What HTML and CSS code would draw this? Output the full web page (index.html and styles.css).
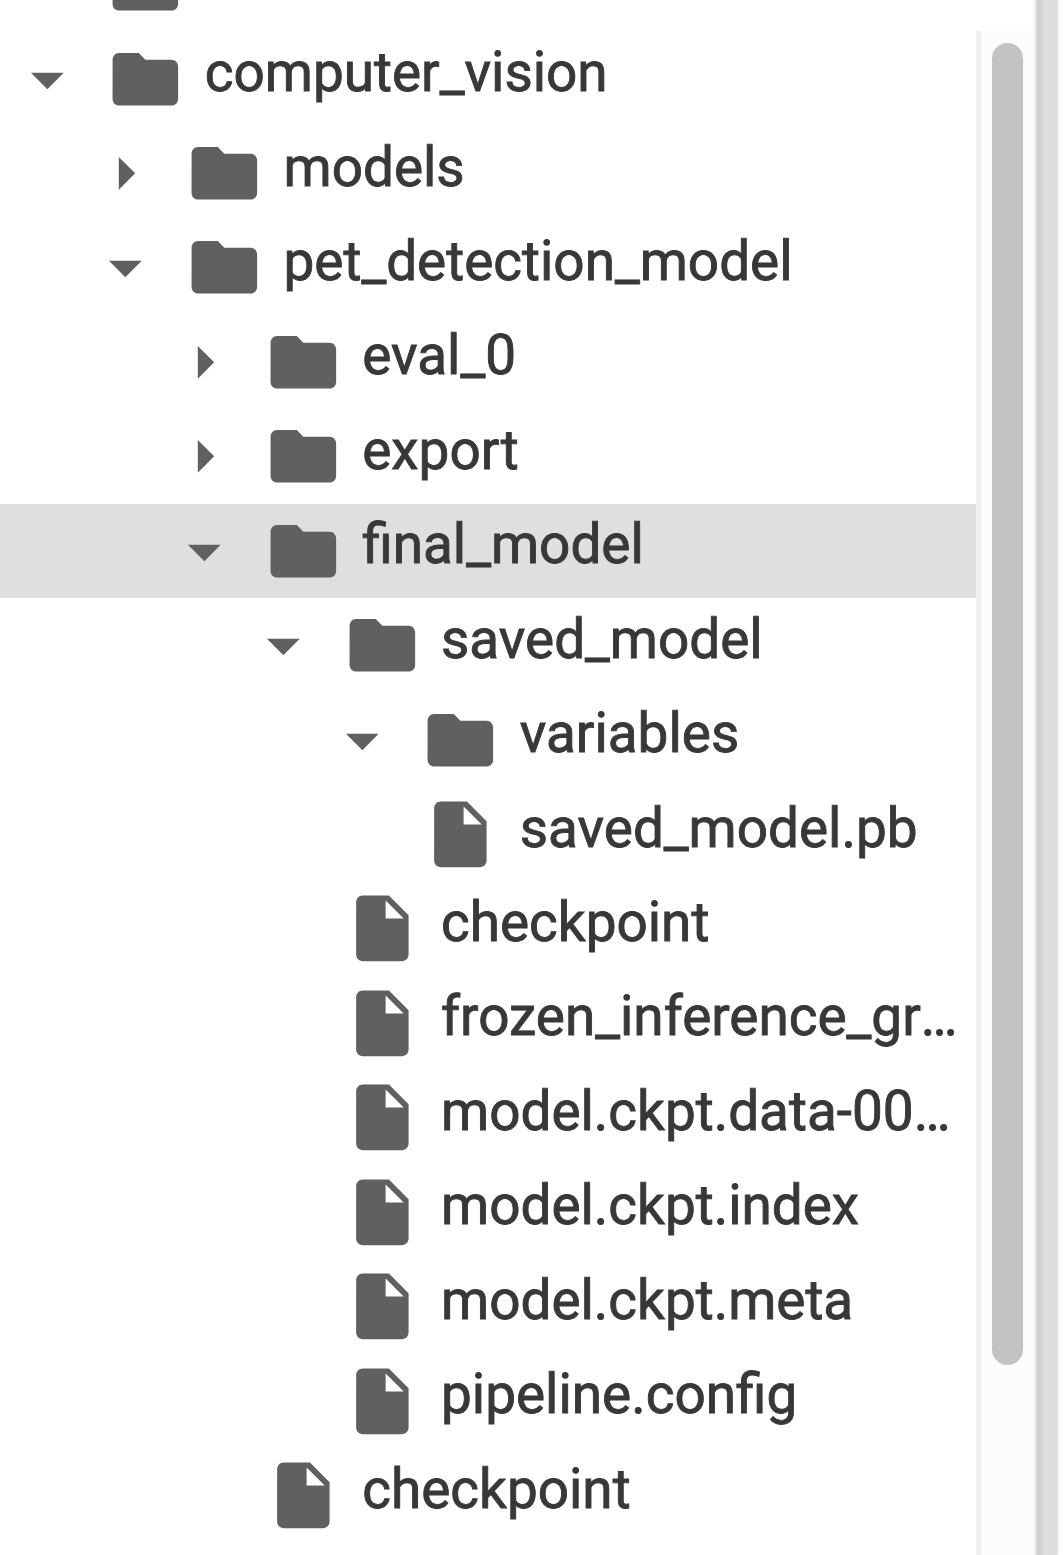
FILE: index.html
```html
<!DOCTYPE html>
<html lang="en">
<head>
<meta charset="utf-8">
<title>Files</title>
<link rel="stylesheet" href="styles.css">
</head>
<body>
<svg class="defs" aria-hidden="true">
  <symbol id="folder" viewBox="0 0 24 24"><path d="M10 4H4c-1.100 0-1.990.9-1.990 2L2 18c0 1.100.9 2 2 2h16c1.100 0 2-.9 2-2V8c0-1.100-.9-2-2-2h-8l-2-2z"/></symbol>
  <symbol id="file" viewBox="0 0 24 24"><path d="M6 2c-1.100 0-1.990.9-1.990 2L4 20c0 1.100.89 2 1.990 2H18c1.100 0 2-.9 2-2V8l-6-6H6zm7 7V3.500L18.500 9H13z"/></symbol>
  <symbol id="down" viewBox="0 0 24 24"><path d="M7 10l5 5 5-5z"/></symbol>
  <symbol id="right" viewBox="0 0 24 24"><path d="M10 17l5-5-5-5z"/></symbol>
</svg>
<div class="panel">
  <ul class="tree">
    <li class="row"><svg class="arrow"></svg><svg class="icon"><use href="#folder"/></svg></li>
    <li class="row"><svg class="arrow"><use href="#down"/></svg><svg class="icon"><use href="#folder"/></svg><span class="name">computer_vision</span></li>
    <li class="row l1"><svg class="arrow"><use href="#right"/></svg><svg class="icon"><use href="#folder"/></svg><span class="name">models</span></li>
    <li class="row l1"><svg class="arrow"><use href="#down"/></svg><svg class="icon"><use href="#folder"/></svg><span class="name">pet_detection_model</span></li>
    <li class="row l2"><svg class="arrow"><use href="#right"/></svg><svg class="icon"><use href="#folder"/></svg><span class="name">eval_0</span></li>
    <li class="row l2"><svg class="arrow"><use href="#right"/></svg><svg class="icon"><use href="#folder"/></svg><span class="name">export</span></li>
    <li class="row l2 selected"><svg class="arrow"><use href="#down"/></svg><svg class="icon"><use href="#folder"/></svg><span class="name">final_model</span></li>
    <li class="row l3"><svg class="arrow"><use href="#down"/></svg><svg class="icon"><use href="#folder"/></svg><span class="name">saved_model</span></li>
    <li class="row l4"><svg class="arrow"><use href="#down"/></svg><svg class="icon"><use href="#folder"/></svg><span class="name">variables</span></li>
    <li class="row l4"><svg class="arrow"></svg><svg class="icon"><use href="#file"/></svg><span class="name">saved_model.pb</span></li>
    <li class="row l3"><svg class="arrow"></svg><svg class="icon"><use href="#file"/></svg><span class="name">checkpoint</span></li>
    <li class="row l3"><svg class="arrow"></svg><svg class="icon"><use href="#file"/></svg><span class="name">frozen_inference_gr<span class="more">…</span></span></li>
    <li class="row l3"><svg class="arrow"></svg><svg class="icon"><use href="#file"/></svg><span class="name">model.ckpt.data-00<span class="more">…</span></span></li>
    <li class="row l3"><svg class="arrow"></svg><svg class="icon"><use href="#file"/></svg><span class="name">model.ckpt.index</span></li>
    <li class="row l3"><svg class="arrow"></svg><svg class="icon"><use href="#file"/></svg><span class="name">model.ckpt.meta</span></li>
    <li class="row l3"><svg class="arrow"></svg><svg class="icon"><use href="#file"/></svg><span class="name">pipeline.config</span></li>
    <li class="row l2"><svg class="arrow"></svg><svg class="icon"><use href="#file"/></svg><span class="name">checkpoint</span></li>
  </ul>
  <div class="track"><div class="thumb"></div></div>
  <div class="divider"></div>
</div>
</body>
</html>
```
FILE: styles.css
```css
* { box-sizing: border-box; }
body {
  margin: 0;
  background: #fff;
  color: #383838;
  font-family: Roboto, sans-serif;
  overflow: hidden;
}
.defs { display: none; }
.panel {
  display: flex;
  width: 1063px;
  height: 1555px;
  overflow: hidden;
}
.tree {
  flex: none;
  width: 976px;
  margin: -62.700px 0 0;
  padding: 0;
  list-style: none;
}
.row {
  --level: 0;
  display: flex;
  align-items: center;
  height: 94.430px;
  padding-left: calc(7.600px + var(--level) * 78.750px);
  white-space: nowrap;
}
.l1 { --level: 1; }
.l2 { --level: 2; }
.l3 { --level: 3; }
.l4 { --level: 4; }
.selected { background: #dfdfdf; }
.arrow, .icon {
  flex: none;
  width: 78.700px;
  height: 78.700px;
  fill: #606060;
}
.icon { margin: 0 19.800px 0 20px; }
.name {
  font-size: 54.900px;
  line-height: 64px;
  padding-bottom: 13.500px;
  -webkit-text-stroke: 0.900px #383838;
}
.more { display: inline-block; }
.track {
  flex: none;
  width: 58px;
  height: 1524px;
  margin-top: 31px;
  padding: 12px 0 0 11px;
  border-left: 5px solid #eee;
  background: #fcfcfc;
}
.thumb {
  width: 31px;
  height: 1322px;
  border-radius: 16px;
  background: #c3c3c3;
}
.divider {
  flex: none;
  width: 25px;
  background: linear-gradient(to right, #ededed 0 2px, #d0d0d0 3px 7px, #ddd 10px 23px, #f0f0f0 24px);
}
```
